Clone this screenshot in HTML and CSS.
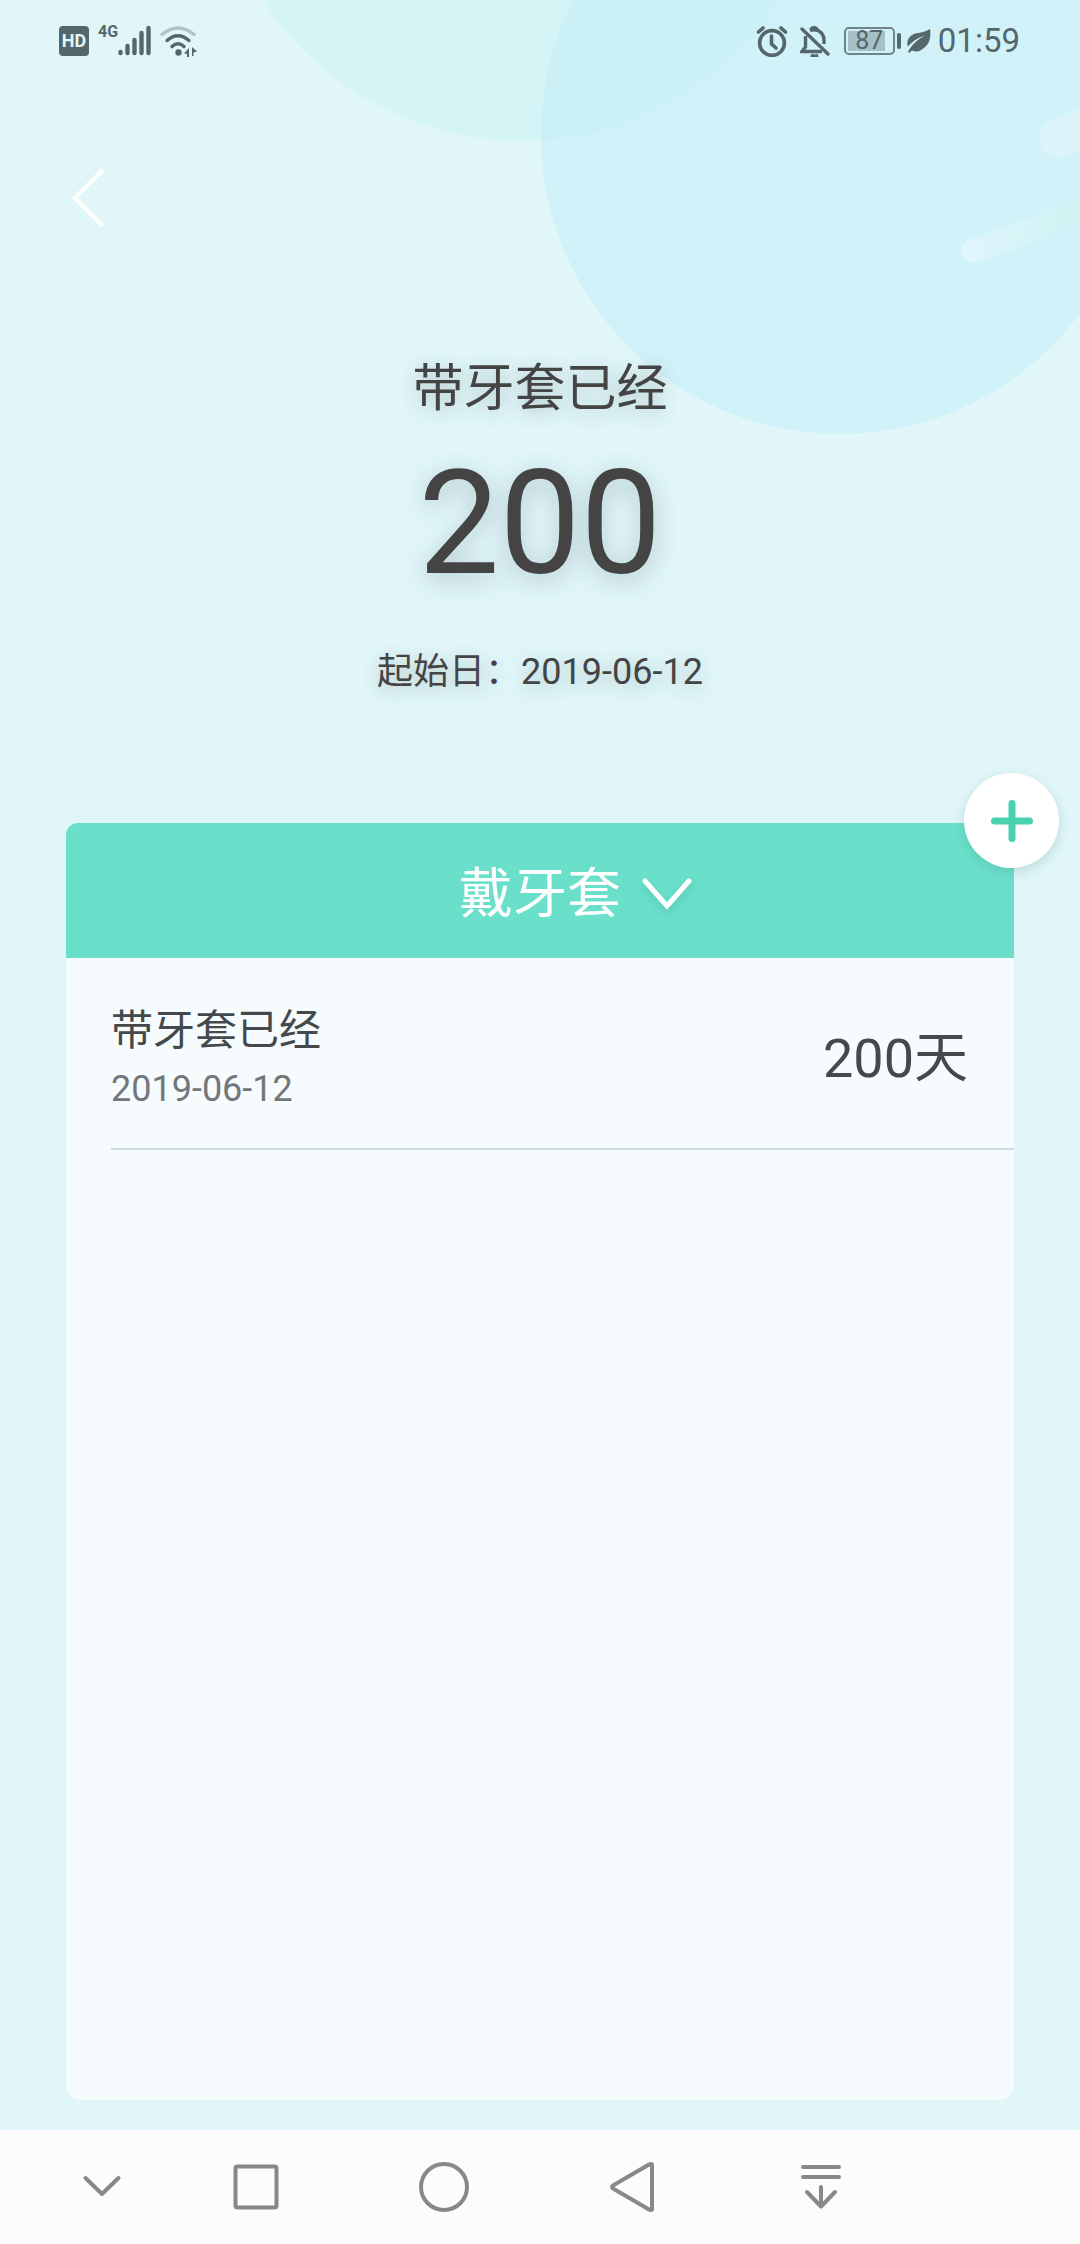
FILE: index.html
```html
<!DOCTYPE html>
<html lang="zh-CN">
<head>
<meta charset="utf-8">
<meta name="viewport" content="width=device-width, initial-scale=1">
<title>带牙套已经</title>
<link rel="stylesheet" href="styles.css">
</head>
<body>
<div class="screen">
  <svg class="backdrop" viewBox="0 0 1080 440" aria-hidden="true">
    <defs>
      <linearGradient id="sky" x1="0" y1="0" x2="1" y2="0">
        <stop offset="0" stop-color="#c6eff7" stop-opacity=".66"/>
        <stop offset="1" stop-color="#c8eff9" stop-opacity=".6"/>
      </linearGradient>
      <linearGradient id="streak" gradientUnits="userSpaceOnUse" x1="961" y1="0" x2="1080" y2="0">
        <stop offset="0" stop-color="#e1f6fc"/>
        <stop offset="1" stop-color="#cff3f2" stop-opacity=".8"/>
      </linearGradient>
    </defs>
    <circle cx="522" cy="-168" r="309" fill="#d4f4f6"/>
    <circle cx="840" cy="135" r="299" fill="url(#sky)"/>
    <path d="M973 251 1100 205" stroke="url(#streak)" stroke-width="24" stroke-linecap="round"/>
    <path d="M1059 138 1120 115" stroke="#dcf4f9" stroke-width="40" stroke-linecap="round"/>
  </svg>

  <header class="status">
    <div class="status-group">
      <span class="hd">HD</span>
      <span class="network">4G</span>
      <svg class="signal" width="33" height="32" viewBox="0 0 33 32" stroke="currentColor" stroke-width="4.4" stroke-linecap="round">
        <path d="M2.500 27v1M9.500 21v7M16.500 15v13M23.500 8v20M30.500 3v25"/>
      </svg>
      <svg class="wifi" width="38" height="32" viewBox="0 0 38 32" fill="none" stroke="currentColor" stroke-width="3.400" stroke-linecap="round">
        <path d="M2 9.500Q18 -3.500 34 9.500" opacity=".35"/>
        <path d="M7 15.500Q18 6 29 15.500M12 21.500Q18 16 24 21.500"/>
        <circle cx="18.500" cy="27.500" r="3.200" fill="currentColor" stroke="none"/>
        <path d="M29 23v9h-2v-3l-3-.500zM32 22l5 4.500-3.500 1V31H32z" fill="currentColor" stroke="none"/>
      </svg>
    </div>
    <div class="status-group">
      <svg class="alarm" width="32" height="32" viewBox="0 0 32 32" fill="none" stroke="currentColor" stroke-width="3.600" stroke-linecap="round">
        <circle cx="16" cy="18" r="12.400"/>
        <path d="M2.500 7 7 3M29.500 7 25 3"/>
        <path d="M15.500 11v8l4.500 4"/>
      </svg>
      <svg class="bell" width="30" height="32" viewBox="0 0 30 32" fill="none" stroke="currentColor" stroke-width="3.400">
        <path d="M2 4 28 29" stroke-linecap="round"/>
        <path d="M5.500 11V22L2 26.500H22M10 5.500Q14 4 18 5.500 24 8.500 24 15V19"/>
        <path d="M10.500 4.500Q14 .500 17.500 4.500"/>
        <path d="M11 30Q14.500 32.500 18 30"/>
      </svg>
      <span class="battery"><span class="level">87</span></span>
      <svg class="leaf" width="24" height="26" viewBox="0 0 24 26">
        <path d="M23 1Q25 14 17 20 11 25.500 5 22.500L2 25 1 23.500 3 20.500Q9 12 18 7.500 8 10.500 .800 18.500-1.500 9 8 5.500 18 4 23 1Z" fill="currentColor"/>
      </svg>
      <time class="clock">01:59</time>
    </div>
  </header>

  <nav class="topbar">
    <button class="back" type="button" aria-label="返回">
      <svg width="48" height="60" viewBox="0 0 48 60" fill="none" stroke="#fff" stroke-width="4.500"><path d="M37 2 9 30 37 58"/></svg>
    </button>
  </nav>

  <section class="hero">
    <h1 class="hero-title">带牙套已经</h1>
    <p class="hero-count">200</p>
    <p class="hero-date">起始日：2019-06-12</p>
  </section>

  <main class="card">
    <button class="picker" type="button">
      <span class="picker-label">戴牙套</span>
      <svg class="picker-arrow" width="52" height="36" viewBox="0 0 52 36" fill="none" stroke="#fff" stroke-width="5" stroke-linecap="round"><path d="M4 4 26 29 48 4"/></svg>
    </button>
    <ul class="days">
      <li class="day">
        <div class="day-info">
          <h2 class="day-title">带牙套已经</h2>
          <time class="day-date">2019-06-12</time>
        </div>
        <span class="day-count">200天</span>
      </li>
    </ul>
    <button class="add" type="button" aria-label="添加">
      <svg width="42" height="42" viewBox="0 0 42 42" stroke="#49d2ae" stroke-width="7" stroke-linecap="round"><path d="M21 3.500v35M3.500 21h35"/></svg>
    </button>
  </main>

  <footer class="navbar">
    <button type="button" aria-label="隐藏导航栏"><svg width="54" height="54" viewBox="0 0 54 54"><path d="M10.500 18 27 34 43.500 18"/></svg></button>
    <button type="button" aria-label="最近任务"><svg width="54" height="54" viewBox="0 0 54 54"><rect x="6.500" y="6.500" width="41" height="41" rx="2"/></svg></button>
    <button type="button" aria-label="主屏幕"><svg width="54" height="54" viewBox="0 0 54 54"><circle cx="27" cy="27" r="23"/></svg></button>
    <button type="button" aria-label="返回上一级"><svg width="54" height="54" viewBox="0 0 54 54"><path d="M47 4.500V49.500Q46 50.500 44 49.500L8 28.500Q6 27 8 25.500L44 4.500Q46 3.500 47 4.500Z"/></svg></button>
    <button type="button" aria-label="下拉通知"><svg width="54" height="54" viewBox="0 0 54 54"><path d="M10 7H46M10 17H46M28 27V46M14 32 28 46.500 42 32"/></svg></button>
  </footer>
</div>
</body>
</html>
```
FILE: styles.css
```css
* {
  box-sizing: border-box;
}

body {
  margin: 0;
  background: #e0f6f9;
  color: #444;
  font-family: Roboto, "Noto Sans CJK SC", sans-serif;
}

h1, h2, p, ul {
  margin: 0;
  padding: 0;
  font-weight: 400;
}

button {
  margin: 0;
  padding: 0;
  border: 0;
  background: none;
  font: inherit;
  cursor: pointer;
}

svg {
  display: block;
  flex: none;
}

.screen {
  position: relative;
  display: flex;
  flex-direction: column;
  min-height: 100vh;
  overflow: hidden;
}

/* Decorative circles behind the header */
.backdrop {
  position: absolute;
  top: 0;
  left: 0;
  z-index: -1;
  width: 100%;
}

/* Status bar */
.status {
  display: flex;
  justify-content: space-between;
  height: 82px;
  padding: 0 60px 0 59px;
  color: #55676a;
}

.status-group {
  display: flex;
  align-items: center;
}

.hd {
  width: 30px;
  border-radius: 4px;
  background: #55676a;
  color: #e0f6f9;
  font-size: 18px;
  font-weight: 700;
  line-height: 30px;
  text-align: center;
}

.network {
  align-self: flex-start;
  margin: 22px 0 0 9px;
  font-size: 16px;
  font-weight: 700;
  line-height: 20px;
}

.wifi {
  margin-left: 9px;
}

.bell {
  margin-left: 12px;
}

.battery {
  position: relative;
  width: 51px;
  height: 28px;
  margin: 0 12px 0 14px;
  padding: 2px 8px 2px 2px;
  border: 2px solid #6f8386;
  border-radius: 5px;
}

.battery::after {
  position: absolute;
  top: 4px;
  right: -8px;
  width: 4px;
  height: 16px;
  border-radius: 2px;
  background: #55676a;
  content: "";
}

.level {
  display: block;
  padding-left: 6px;
  background: #a5c1c7;
  font-size: 25px;
  line-height: 20px;
  text-align: center;
}

.clock {
  margin-left: 7px;
  font-size: 33px;
  line-height: 40px;
}

/* Top bar */
.topbar {
  padding: 86px 66px 0;
}

.back {
  display: block;
}

/* Summary */
.hero {
  padding: 126px 66px 127px;
  text-align: center;
}

.hero-title {
  font-size: 51px;
  line-height: 70px;
  text-shadow: 0 4px 18px rgba(60, 80, 80, .3);
}

.hero-count {
  margin-top: 28px;
  font-size: 144px;
  line-height: 144px;
  text-shadow: 0 6px 24px rgba(60, 80, 80, .3);
}

.hero-date {
  margin-top: 52px;
  font-size: 36px;
  line-height: 48px;
  text-shadow: 0 4px 18px rgba(60, 80, 80, .3);
}

/* Card */
.card {
  position: relative;
  flex: 1;
  margin: 0 66px 30px;
  border-radius: 15px;
  background: #f6fbfe;
}

.picker {
  display: grid;
  grid-template-columns: 1fr auto 1fr;
  align-items: center;
  width: 100%;
  height: 135px;
  padding-top: 8px;
  border-radius: 12px 0 0 0;
  background: #6ae0ca;
  color: #fff;
}

.picker-label {
  grid-column: 2;
  font-size: 54px;
  line-height: 72px;
}

.picker-arrow {
  margin-left: 20px;
  filter: drop-shadow(0 4px 5px rgba(40, 120, 110, .25));
}

.days {
  list-style: none;
}

.day {
  display: flex;
  align-items: center;
  justify-content: space-between;
  height: 192px;
  margin-left: 45px;
  padding: 12px 46px 0 0;
  border-bottom: 2px solid #cfdcdf;
}

.day-title {
  color: #44494c;
  font-size: 42px;
  line-height: 60px;
}

.day-date {
  display: block;
  color: #737779;
  font-size: 36px;
  line-height: 56px;
}

.day-count {
  color: #44494c;
  font-size: 54px;
  line-height: 72px;
}

.add {
  position: absolute;
  top: -50px;
  right: -45px;
  display: grid;
  place-items: center;
  width: 95px;
  height: 95px;
  border-radius: 50%;
  background: #fff;
  box-shadow: 0 4px 12px rgba(60, 110, 110, .2);
}

/* System navigation */
.navbar {
  display: grid;
  grid-template-columns: 120fr repeat(4, 188fr) 166fr;
  height: 114px;
  padding-left: 42px;
  background: #fcfcfc;
}

.navbar button {
  display: grid;
  place-items: center;
}

.navbar svg {
  fill: none;
  stroke: #888;
  stroke-width: 4;
  stroke-linecap: round;
  stroke-linejoin: round;
}
```
